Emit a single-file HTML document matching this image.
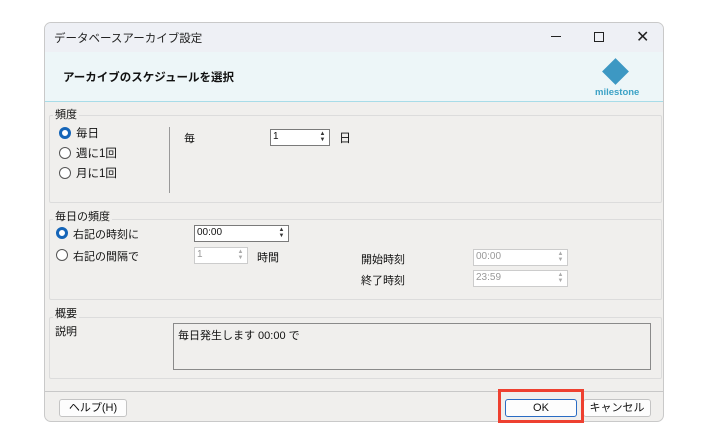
<!DOCTYPE html><html><head><meta charset="utf-8"><style>
*{margin:0;padding:0;box-sizing:border-box}
body{width:708px;height:443px;background:#fff;position:relative;font-family:"Liberation Sans","Noto Sans CJK JP",sans-serif;font-size:11px;color:#111;overflow:hidden}
.a{position:absolute}
.win{left:44px;top:22px;width:620px;height:400px;border:1px solid #c9c9c9;border-radius:7px;background:#f0efed;overflow:hidden}
.title{left:0;top:0;width:620px;height:29px;background:#eef0f5}
.head{left:0;top:29px;width:620px;height:50px;background:#edf6f8;border-bottom:1px solid #a8dce8}
.grp{border:1px solid #dcdcdc;border-radius:2px}
.lbl{background:#f0efed;padding:0 2px}
.rad{width:12px;height:12px;border-radius:50%;border:1px solid #555;background:#fff}
.rad.on{border:3.5px solid #1565b8}
.inp{background:#fff;border:1px solid #7a7a7a;font-size:10px;padding:1px 2px;height:17px}
.dis{border-color:#ccc;color:#999}
.sp{position:absolute;right:1px;top:1px;width:11px;height:13px;font-size:6px;line-height:6px;text-align:center;color:#333}
.btn{background:#fdfdfd;border:1px solid #c4c4c4;border-radius:3px;text-align:center;line-height:16px;font-size:11px}
</style></head><body>
<div class="a win">
<div class="a title"></div>
<div class="a" style="left:9px;top:7px;font-size:11.5px;color:#222">データベースアーカイブ設定</div>
<div class="a" style="left:506px;top:13px;width:10px;height:1px;background:#222"></div>
<div class="a" style="left:549px;top:9px;width:10px;height:10px;border:1px solid #222"></div>
<div class="a" style="left:591px;top:4px;font-size:16px;color:#222">✕</div>
<div class="a head"></div>
<div class="a" style="left:18px;top:46px;font-weight:bold;font-size:11.5px">アーカイブのスケジュールを選択</div>
<div class="a" style="left:561px;top:39px;width:19px;height:19px;background:#3d98c3;transform:rotate(45deg)"></div>
<div class="a" style="left:550px;top:64px;font-size:9.5px;font-weight:bold;color:#3ca2c6">milestone</div>

<div class="a grp" style="left:4px;top:92px;width:613px;height:88px"></div>
<div class="a lbl" style="left:8px;top:83px">頻度</div>
<div class="a rad on" style="left:14px;top:104px"></div><div class="a" style="left:31px;top:102px;font-size:11.5px">毎日</div>
<div class="a rad" style="left:14px;top:124px"></div><div class="a" style="left:31px;top:122px;font-size:11.5px">週に1回</div>
<div class="a rad" style="left:14px;top:144px"></div><div class="a" style="left:31px;top:142px;font-size:11.5px">月に1回</div>
<div class="a" style="left:124px;top:104px;width:1px;height:66px;background:#999"></div>
<div class="a" style="left:139px;top:107px">毎</div>
<div class="a inp" style="left:225px;top:106px;width:60px">1<div class="sp">▲<br>▼</div></div>
<div class="a" style="left:294px;top:106px;font-size:12px">日</div>

<div class="a grp" style="left:4px;top:196px;width:613px;height:81px"></div>
<div class="a lbl" style="left:8px;top:185px">毎日の頻度</div>
<div class="a rad on" style="left:11px;top:204px"></div><div class="a" style="left:28px;top:203px">右記の時刻に</div>
<div class="a inp" style="left:149px;top:202px;width:95px">00:00<div class="sp">▲<br>▼</div></div>
<div class="a rad" style="left:11px;top:226px"></div><div class="a" style="left:28px;top:225px">右記の間隔で</div>
<div class="a inp dis" style="left:149px;top:224px;width:54px">1<div class="sp" style="color:#aaa">▲<br>▼</div></div>
<div class="a" style="left:212px;top:226px">時間</div>
<div class="a" style="left:316px;top:228px">開始時刻</div>
<div class="a inp dis" style="left:428px;top:226px;width:95px">00:00<div class="sp" style="color:#aaa">▲<br>▼</div></div>
<div class="a" style="left:316px;top:249px">終了時刻</div>
<div class="a inp dis" style="left:428px;top:247px;width:95px">23:59<div class="sp" style="color:#aaa">▲<br>▼</div></div>

<div class="a grp" style="left:4px;top:294px;width:613px;height:62px"></div>
<div class="a lbl" style="left:8px;top:282px">概要</div>
<div class="a" style="left:10px;top:300px">説明</div>
<div class="a" style="left:128px;top:300px;width:478px;height:47px;border:1px solid #8a8a8a;background:#f0efed;padding:3px 4px">毎日発生します 00:00 で</div>

<div class="a" style="left:0;top:368px;width:620px;height:1px;background:#c8c8c8"></div>
<div class="a btn" style="left:14px;top:376px;width:68px;height:18px">ヘルプ(H)</div>
<div class="a btn" style="left:460px;top:376px;width:72px;height:18px;border-color:#2a6cc4">OK</div>
<div class="a btn" style="left:538px;top:376px;width:68px;height:18px">キャンセル</div>
</div>
<div class="a" style="left:498px;top:389px;width:86px;height:34px;border:3px solid #ee4030"></div>
</body></html>
